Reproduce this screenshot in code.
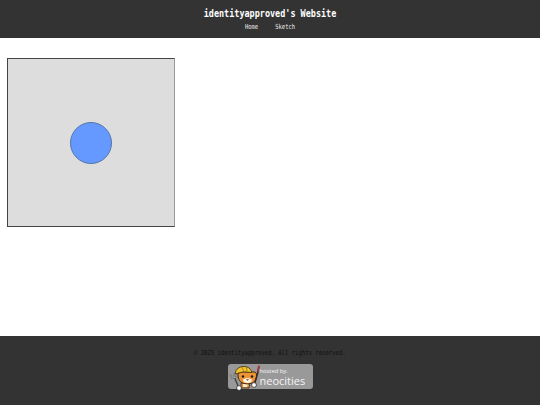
<script>
</script>

<div class="page">
  <header class="top">
    <h1>identityapproved's Website</h1>
    <nav><a href="#home">Home</a><a href="#sketch">Sketch</a></nav>
  </header>
  <main>
    <div class="canvas"><div class="dot"></div></div>
  </main>
  <footer>
    <p>© 2025 identityapproved. All rights reserved.</p>
    <a class="badge" href="#neocities">
      <svg width="31" height="27" viewBox="0 0 31 27" class="cat">
        <!-- trident -->
        <path d="M1 9 L3 13 L8 12 L8 7 M4.5 8 L5.5 12.5 M5.5 12.5 L9.5 22" stroke="#3d3d3d" stroke-width="1.3" fill="none"/>
        <path d="M1 9 L3 13 L8 12 L8 7 M4.5 8 L5.5 12.5" stroke="#e6e6e6" stroke-width=".6" fill="none"/>
        <!-- body -->
        <path d="M12 18 L21 18 L20 23 L12 23Z" fill="#e58f34" stroke="#3c2412" stroke-width=".8"/>
        <path d="M14 19 L19 19 L18 22 L14 22Z" fill="#f6ead2"/>
        <circle cx="10" cy="23" r="2.4" fill="#fff" stroke="#2e2e2e" stroke-width=".8"/>
        <!-- head -->
        <path d="M9 10 L10 7 L26 7 L27.5 9 Q29 18 19 19 Q9 19 9 10Z" fill="#ee9434" stroke="#3c2412" stroke-width=".9"/>
        <path d="M14 14.5 Q18.5 11.5 23 14.5 Q23 18 18.5 18 Q14 18 14 14.5Z" fill="#fbf3e0"/>
        <circle cx="14" cy="11.5" r="1.2" fill="#1f1a16"/>
        <circle cx="23" cy="11.5" r="1.2" fill="#1f1a16"/>
        <path d="M17 14.3 L20 14.3 L18.5 15.8Z" fill="#6b2f1c"/>
        <!-- helmet -->
        <path d="M6 9 Q7 2 14 1.5 Q21 1 23 7.5 Q14 5.5 6 9Z" fill="#f2c22f" stroke="#4f3e0e" stroke-width=".9"/>
        <path d="M13 2 L14.5 6 M17.5 2 L18 6" stroke="#9a7a14" stroke-width=".8"/>
        <!-- brush -->
        <path d="M29.5 5 L25.5 19" stroke="#3b2320" stroke-width="1.5"/>
        <path d="M30 1.5 L29 6" stroke="#9b3b3f" stroke-width="2.2" stroke-linecap="round"/>
        <circle cx="25" cy="20" r="2.4" fill="#fff" stroke="#2e2e2e" stroke-width=".8"/>
      </svg>
      <span class="words"><span class="hosted">hosted by.</span><span class="neo">neocities</span></span>
    </a>
  </footer>
</div>

<style>
  :global(body) { margin: 0; background: #fff; }
  .page {
    display: flex;
    flex-direction: column;
    height: 405px;
    font-family: "DejaVu Sans Mono", monospace;
  }
  .top {
    height: 38px;
    box-sizing: border-box;
    background: #333;
    color: #fff;
    text-align: center;
    padding-top: 7px;
  }
  h1 { margin: 0; font-size: 11px; line-height: 13px; font-weight: 700; transform: scaleX(0.77); }
  nav { display: flex; justify-content: center; gap: 22px; margin-top: 3px; transform: scaleX(0.78); }
  nav a { color: #eee; text-decoration: none; font-size: 7px; line-height: 9px; }
  main { flex: 1; padding: 20px 7px 0; }
  .canvas {
    width: 168px;
    height: 169px;
    box-sizing: border-box;
    background: #ddd;
    border: 1px solid #444;
    border-right-color: #999;
    display: flex;
    align-items: center;
    justify-content: center;
  }
  .dot {
    width: 40px;
    height: 40px;
    border-radius: 50%;
    background: #6699ff;
    border: 1px solid #5577aa;
  }
  footer {
    height: 69px;
    box-sizing: border-box;
    background: #333;
    padding-top: 13px;
    display: flex;
    flex-direction: column;
    align-items: center;
  }
  footer p { margin: 0; font-size: 7px; line-height: 8px; color: #111; transform: scaleX(0.8); white-space: nowrap; }
  .badge {
    display: flex;
    align-items: flex-start;
    width: 85px;
    height: 25px;
    margin-top: 7px;
    border-radius: 3px;
    background: #999;
    text-decoration: none;
    position: relative;
  }
  .cat { flex: none; margin-left: 1px; margin-top: 1px; }
  .words { display: flex; flex-direction: column; padding-top: 4px; font-family: "Open Sans", sans-serif; color: #f4f4f4; white-space: nowrap; }
  .hosted { font-size: 6px; line-height: 7px; letter-spacing: -0.1px; }
  .neo { font-size: 11px; line-height: 11px; }
</style>
